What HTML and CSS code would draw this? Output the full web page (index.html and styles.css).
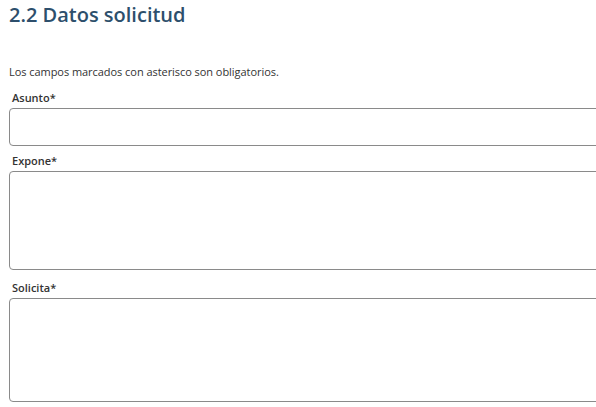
FILE: index.html
```html
<!DOCTYPE html>
<html lang="es">
<head>
<meta charset="utf-8">
<link rel="stylesheet" href="styles.css">
</head>
<body>
<div class="page">
  <h2 class="title">2.2 Datos solicitud</h2>
  <p class="note">Los campos marcados con asterisco son obligatorios.</p>
  <div class="field first">
    <label class="label">Asunto*</label>
    <div class="input short"></div>
  </div>
  <div class="field second">
    <label class="label">Expone*</label>
    <div class="input mid"></div>
  </div>
  <div class="field third">
    <label class="label">Solicita*</label>
    <div class="input tall"></div>
  </div>
</div>
</body>
</html>
```
FILE: styles.css
```css
html, body {
  margin: 0;
  padding: 0;
  background: #fff;
}
body {
  font-family: "Open Sans", "Liberation Sans", sans-serif;
  color: #333;
  overflow: hidden;
}
.page {
  padding: 0 0 0 9px;
  width: 587px;
  overflow: hidden;
}
.title {
  margin: 0;
  font-size: 20px;
  font-weight: 600;
  line-height: 30px;
  color: #2d4f6c;
}
.note {
  margin: 34px 0 0 0;
  font-size: 11px;
  line-height: 15px;
  color: #333;
  letter-spacing: -0.05px;
}
.first { margin-top: 11px; }
.second { margin-top: 7px; }
.third { margin-top: 10px; }
.label {
  display: block;
  font-size: 11px;
  font-weight: 600;
  line-height: 15px;
  color: #333;
  padding-left: 3px;
  margin-bottom: 3px;
}
.input {
  box-sizing: border-box;
  width: calc(100% + 12px);
  border: 1px solid #8a8a8a;
  border-radius: 4px;
  background: #fff;
}
.short { height: 38px; }
.mid { height: 99px; }
.tall { height: 104px; }
```
